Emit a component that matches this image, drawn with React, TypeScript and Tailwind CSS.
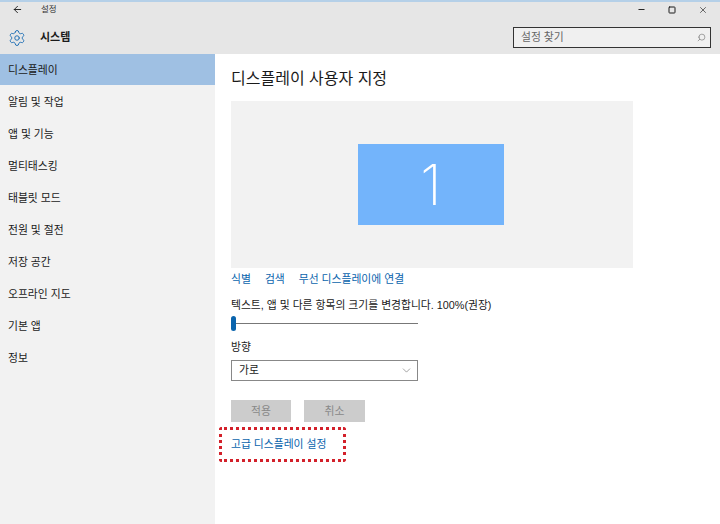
import { ArrowLeft, ChevronDown, Minus, Search, Settings, Square, X } from 'lucide-react';

const MENU = ['알림 및 작업', '앱 및 기능', '멀티태스킹', '태블릿 모드', '전원 및 절전', '저장 공간', '오프라인 지도', '기본 앱', '정보'];

export default function App() {
  return (
    <div className="w-[720px] h-[524px] overflow-hidden flex flex-col bg-white text-[#1a1a1a] font-['Liberation_Sans','Noto_Sans_CJK_KR',sans-serif] text-[10.8px] border-t-2 border-[#b5d0e8]">
      {/* Title bar */}
      <header className="h-[52px] shrink-0 bg-[#e6e6e6] flex flex-col">
        <div className="h-[15px] flex items-center pl-[12px] pr-[12px]">
          <ArrowLeft className="w-[11px] h-[11px]" strokeWidth={2} />
          <span className="ml-[18px] text-[8.5px] text-[#333]">설정</span>
          <div className="ml-auto flex items-center gap-[22px]">
            <Minus className="w-[9px] h-[9px]" strokeWidth={2.5} />
            <Square className="w-[8px] h-[8px]" strokeWidth={3} />
            <X className="w-[10px] h-[10px]" strokeWidth={1.5} />
          </div>
        </div>
        <div className="flex-1 flex items-center pl-[8px] pr-[9px] pt-[4px]">
          <Settings className="w-[18px] h-[18px] text-[#1f6fb5]" strokeWidth={1.3} />
          <span className="ml-[14px] font-semibold text-[11px]">시스템</span>
          <div className="ml-auto -mt-[1px] w-[198px] h-[21px] border border-[#333] bg-[#f0f0f0] flex items-center justify-between pl-[7px] pr-[4px] text-[#666]">
            <span>설정 찾기</span>
            <Search className="w-[9px] h-[9px] -scale-x-100" strokeWidth={1.5} />
          </div>
        </div>
      </header>

      <div className="flex-1 flex min-h-0">
        {/* Sidebar */}
        <aside className="w-[215px] shrink-0 bg-[#f2f2f2] flex flex-col">
          <div className="h-[31px] bg-[#9fc0e3] flex items-center pl-[8px] pt-[1px]">디스플레이</div>
          {MENU.map(item => (
            <div key={item} className="h-[32px] flex items-center pl-[8px] pt-[3px]">{item}</div>
          ))}
        </aside>

        {/* Content */}
        <main className="flex-1 pl-[16px] flex flex-col items-start">
          <h1 className="mt-[13px] text-[16px] leading-[24px]">디스플레이 사용자 지정</h1>
          <div className="mt-[10px] w-[402px] h-[167px] bg-[#f2f2f2] flex items-center justify-center">
            <div className="-ml-[2px] w-[146px] h-[81px] bg-[#73b4fb] flex items-center justify-center text-white text-[56px] font-['Inter'] font-extralight leading-none">1</div>
          </div>
          <div className="mt-[1px] h-[20px] flex items-center gap-[14px] text-[#0a64ad]">
            <span>식별</span>
            <span>검색</span>
            <span>무선 디스플레이에 연결</span>
          </div>
          <p className="mt-[8px] leading-[16px]">텍스트, 앱 및 다른 항목의 크기를 변경합니다. 100%(권장)</p>
          <div className="mt-[3px] w-[187px] h-[15px] flex items-center">
            <div className="w-[5px] h-[15px] rounded-full bg-[#0a64ad] shrink-0" />
            <div className="flex-1 h-[1px] bg-[#777]" />
          </div>
          <label className="mt-[8px] leading-[16px]">방향</label>
          <div className="mt-[5px] w-[187px] h-[21px] border border-[#888] flex items-center justify-between pl-[7px] pr-[4px]">
            <span>가로</span>
            <ChevronDown className="w-[13px] h-[13px] text-[#555]" strokeWidth={1} />
          </div>
          <div className="mt-[19px] flex gap-[13px]">
            <div className="w-[60px] h-[22px] bg-[#cccccc] flex items-center justify-center text-[#888]">적용</div>
            <div className="w-[61px] h-[22px] bg-[#cccccc] flex items-center justify-center text-[#888]">취소</div>
          </div>
          <div className="mt-[5px] -ml-[12px] w-[127px] h-[35px] border-[3px] border-dotted border-[#d3202a] rounded-[3px] flex items-center pl-[9px] text-[#0a64ad]">
            고급 디스플레이 설정
          </div>
        </main>
      </div>
    </div>
  );
}
